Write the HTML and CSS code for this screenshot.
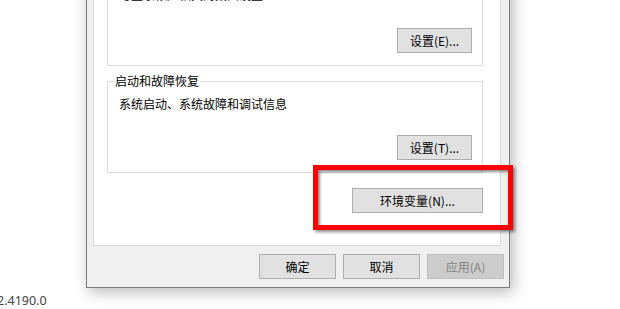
FILE: index.html
```html
<!DOCTYPE html>
<html lang="zh-CN">
<head>
    <meta charset="UTF-8">
    <title>系统属性</title>
    <link rel="stylesheet" href="styles.css">
</head>
<body>
    <div class="screen">
        <div class="window">
            <div class="panel">
                <div class="group group-profile">
                    <p class="desc">与登录帐户相关的桌面设置</p>
                    <div class="group-actions">
                        <button class="button">设置(E)...</button>
                    </div>
                </div>
                <div class="group group-startup">
                    <span class="group-title">启动和故障恢复</span>
                    <p class="desc">系统启动、系统故障和调试信息</p>
                    <div class="group-actions">
                        <button class="button">设置(T)...</button>
                    </div>
                </div>
                <div class="env-row">
                    <button class="button env-button">环境变量(N)...</button>
                </div>
            </div>
            <div class="footer">
                <button class="button footer-button">确定</button>
                <button class="button footer-button">取消</button>
                <button class="button footer-button" disabled>应用(A)</button>
            </div>
        </div>
        <div class="version">2.4190.0</div>
        <div class="highlight"></div>
    </div>
</body>
</html>
```

FILE: styles.css
```css
body {
    margin: 0;
    background-color: #fff;
    font-family: "Microsoft YaHei UI", "Noto Sans CJK SC", sans-serif;
    font-size: 12px;
    color: #000;
}

.screen {
    position: relative;
    width: 620px;
    height: 309px;
    overflow: hidden;
}

.window {
    width: 424px;
    box-sizing: border-box;
    margin: -48px 0 0 86px;
    border: 1px solid #7a7a7a;
    background-color: #f0f0f0;
    box-shadow: 3px 4px 14px rgba(0, 0, 0, 0.28);
}

.panel {
    width: 408px;
    box-sizing: border-box;
    margin-left: 6px;
    padding: 19px 17px 32px 13px;
    border: 1px solid #d9d9d9;
    background-color: #fff;
}

.group {
    position: relative;
    border: 1px solid #dcdcdc;
    padding: 14px 10px 12px 11px;
}

.group-profile {
    padding-top: 13px;
}

.group-startup {
    margin-top: 15px;
}

.group-title {
    position: absolute;
    top: -9px;
    left: 6px;
    padding: 0 1px;
    background-color: #fff;
    line-height: 16px;
}

.desc {
    margin: 0;
    line-height: 16px;
}

.group-actions {
    display: flex;
    justify-content: flex-end;
    margin-top: 25px;
}

.group-startup .group-actions {
    margin-top: 23px;
}

.button {
    height: 25px;
    width: 75px;
    padding: 0;
    border: 1px solid #adadad;
    background-color: #e1e1e1;
    font-family: inherit;
    font-size: 12px;
    color: #000;
}

.button:disabled {
    background-color: #cccccc;
    border-color: #bfbfbf;
    color: #838383;
}

.env-row {
    display: flex;
    justify-content: flex-end;
    margin-top: 15px;
}

.env-button {
    width: 131px;
}

.footer {
    display: flex;
    justify-content: flex-end;
    gap: 7px;
    padding: 8px 5px 8px 0;
}

.footer-button {
    width: 77px;
}

.version {
    margin: 5px 0 0 -3px;
    font-family: "Segoe UI", "Noto Sans", sans-serif;
    font-size: 12.5px;
    line-height: 15px;
    color: #444;
}

/* 红框标注 */
.highlight {
    position: absolute;
    left: 313px;
    top: 165px;
    width: 200px;
    height: 65px;
    box-sizing: border-box;
    border: 5px solid #ff0000;
    box-shadow: 2px 2px 3px rgba(0, 0, 0, 0.45), inset 2px 2px 3px rgba(0, 0, 0, 0.45);
}
```
